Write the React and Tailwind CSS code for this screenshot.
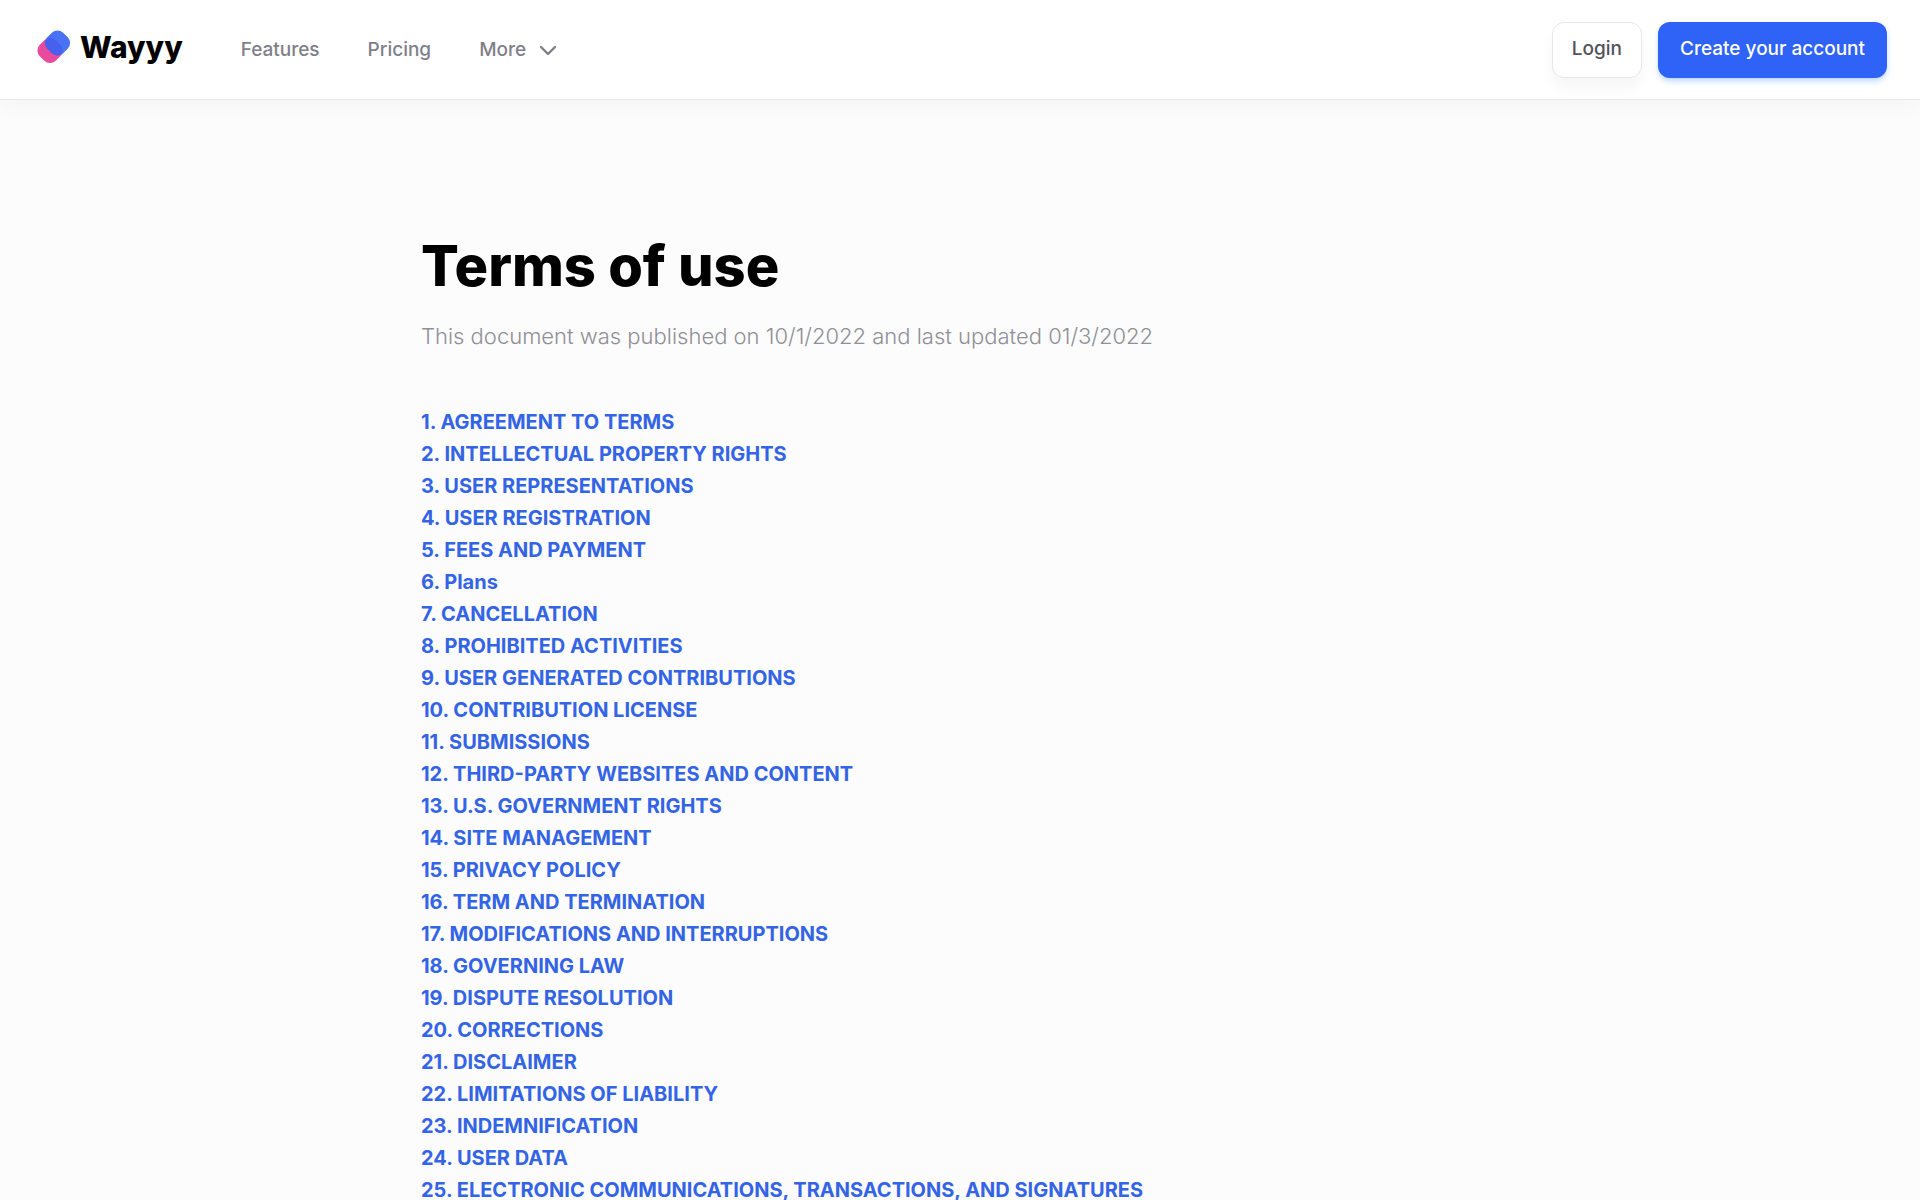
const sections = [
  'AGREEMENT TO TERMS', 'INTELLECTUAL PROPERTY RIGHTS', 'USER REPRESENTATIONS', 'USER REGISTRATION',
  'FEES AND PAYMENT', 'Plans', 'CANCELLATION', 'PROHIBITED ACTIVITIES', 'USER GENERATED CONTRIBUTIONS',
  'CONTRIBUTION LICENSE', 'SUBMISSIONS', 'THIRD-PARTY WEBSITES AND CONTENT', 'U.S. GOVERNMENT RIGHTS',
  'SITE MANAGEMENT', 'PRIVACY POLICY', 'TERM AND TERMINATION', 'MODIFICATIONS AND INTERRUPTIONS',
  'GOVERNING LAW', 'DISPUTE RESOLUTION', 'CORRECTIONS', 'DISCLAIMER', 'LIMITATIONS OF LIABILITY',
  'INDEMNIFICATION', 'USER DATA', 'ELECTRONIC COMMUNICATIONS, TRANSACTIONS, AND SIGNATURES',
];

function Logo() {
  return (
    <a href="#" className="mb-1.5 flex items-center gap-2 text-[30px] leading-10 font-extrabold text-black">
      <svg width="36" height="36" viewBox="0 0 36 36" aria-hidden="true">
        <rect x="2.75" y="10.25" width="22.5" height="22.5" rx="8" transform="rotate(-45 14 21.5)" fill="#e84a9e" />
        <rect x="10.25" y="2.75" width="22.5" height="22.5" rx="8" transform="rotate(-45 21.5 14)" fill="#3563f5" opacity=".9" />
      </svg>
      Wayyy
    </a>
  );
}

export default function App() {
  return (
    <div className="min-h-screen bg-[#fcfcfc] font-['Inter',sans-serif]">
      <header className="flex h-[100px] items-center justify-between border-b border-[#e6e8ec] bg-white pr-[33px] pl-9 shadow-[0_8px_20px_rgba(15,23,42,0.03)]">
        <div className="flex items-center gap-[58px]">
          <Logo />
          <nav className="flex items-center gap-12 pt-0.5 text-[19px] font-medium text-[#7f7f8a]">
            <a href="#">Features</a>
            <a href="#">Pricing</a>
            <button type="button" className="flex items-center gap-2.5">
              More
              <svg width="24" height="24" viewBox="0 0 24 24" fill="none" stroke="currentColor" strokeWidth="2.4" strokeLinecap="round" strokeLinejoin="round" aria-hidden="true"><path d="M5 8l7 7 7-7" /></svg>
            </button>
          </nav>
        </div>
        <div className="flex items-center gap-4 text-[19px] font-medium">
          <button type="button" className="h-14 rounded-xl border border-gray-200 bg-white px-[19px] text-[#52525b] shadow-[0_10px_14px_rgba(15,23,42,0.04)]">Login</button>
          <button type="button" className="h-14 rounded-xl bg-[#2f62f6] px-[22px] text-white shadow-md shadow-blue-200">Create your account</button>
        </div>
      </header>
      <main className="mx-auto max-w-[1078px] pt-32">
        <h1 className="text-[56px] leading-[76px] font-extrabold text-black">Terms of use</h1>
        <p className="mt-4 text-[22px] leading-8 font-light text-[#8f8f98]">This document was published on 10/1/2022 and last updated 01/3/2022</p>
        <ol className="mt-[54px] text-xl leading-8 font-bold text-[#3464e6]">
          {sections.map((name, i) => (
            <li key={name}><a href="#">{i + 1}. {name}</a></li>
          ))}
        </ol>
      </main>
    </div>
  );
}
